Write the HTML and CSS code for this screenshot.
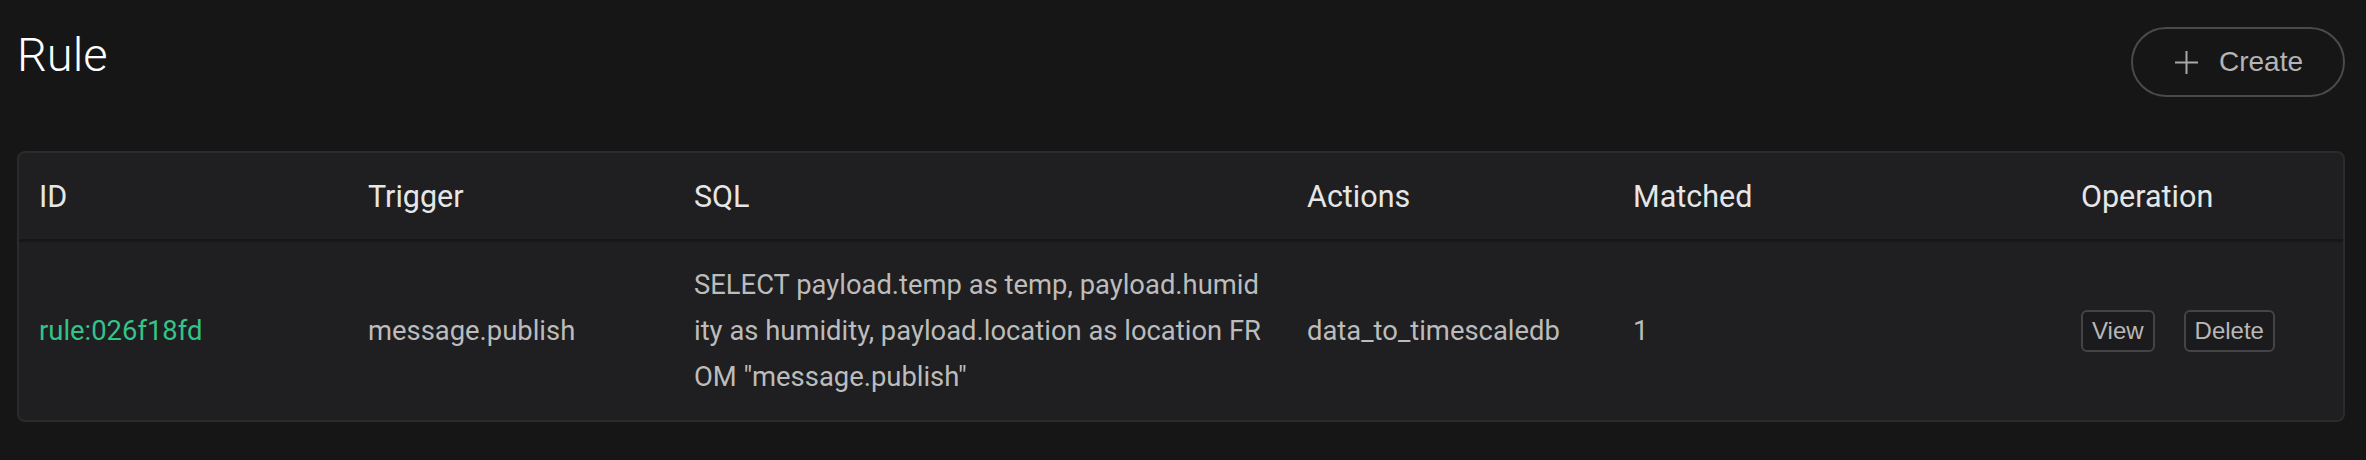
FILE: index.html
```html
<!DOCTYPE html>
<html lang="en">
<head>
<meta charset="utf-8">
<title>Rule</title>
<link rel="stylesheet" href="styles.css">
</head>
<body>
<div class="page">
  <header class="page-header">
    <h1 class="title">Rule</h1>
    <button class="create-btn" type="button">
      <svg class="plus" width="23" height="23" viewBox="0 0 23 23" aria-hidden="true">
        <path d="M11.5 0 V23 M0 11.5 H23" stroke="#a8a8a8" stroke-width="2" fill="none"/>
      </svg>
      <span>Create</span>
    </button>
  </header>
  <div class="card">
    <table class="rules">
      <colgroup>
        <col class="c-id"><col class="c-trigger"><col class="c-sql"><col class="c-actions"><col class="c-matched"><col class="c-op">
      </colgroup>
      <thead>
        <tr>
          <th>ID</th>
          <th>Trigger</th>
          <th>SQL</th>
          <th>Actions</th>
          <th>Matched</th>
          <th>Operation</th>
        </tr>
      </thead>
      <tbody>
        <tr>
          <td><a class="rule-id" href="#">rule:026f18fd</a></td>
          <td>message.publish</td>
          <td class="sql"><span class="sql-line">SELECT payload.temp as temp, payload.humid</span><span class="sql-line">ity as humidity, payload.location as location FR</span><span class="sql-line">OM "message.publish"</span></td>
          <td>data_to_timescaledb</td>
          <td>1</td>
          <td>
            <div class="ops">
              <button class="op-btn" type="button">View</button>
              <button class="op-btn" type="button">Delete</button>
            </div>
          </td>
        </tr>
      </tbody>
    </table>
  </div>
</div>
</body>
</html>
```
FILE: styles.css
```css
html, body {
  margin: 0;
  padding: 0;
  background: #161616;
}
body {
  font-family: Roboto, "Liberation Sans", sans-serif;
  color: #bdbdbd;
}
.page {
  padding: 27px 21px 0 17px;
}
.page-header {
  display: flex;
  justify-content: space-between;
  align-items: flex-start;
}
.title {
  margin: 4px 0 0 0;
  font-size: 47px;
  line-height: 47px;
  font-weight: 300;
  color: #ffffff;
}
.create-btn {
  display: flex;
  align-items: center;
  gap: 21px;
  height: 70px;
  box-sizing: border-box;
  padding: 0 40px 0 42px;
  border: 2px solid #4a4a4d;
  border-radius: 35px;
  background: #161616;
  color: #b4b4b4;
  font-family: "Liberation Sans", Arial, sans-serif;
  font-size: 28px;
  cursor: pointer;
}
.plus {
  display: block;
}
.card {
  margin-top: 54px;
  border: 2px solid #2b2a2d;
  border-radius: 8px;
  background: #1f1e20;
  overflow: hidden;
}
.rules {
  width: 100%;
  table-layout: fixed;
  border-collapse: collapse;
}
.c-id { width: 329px; }
.c-trigger { width: 326px; }
.c-sql { width: 613px; }
.c-actions { width: 326px; }
.c-matched { width: 448px; }
.c-op { width: auto; }
.rules th {
  height: 86px;
  padding: 0 20px;
  text-align: left;
  font-size: 30.5px;
  font-weight: 400;
  color: #e6e6e6;
  border-bottom: 3px solid #171717;
  vertical-align: middle;
}
.rules td {
  padding: 20px 20px;
  font-size: 27.4px;
  line-height: 46px;
  color: #bcbcbc;
  vertical-align: middle;
}
.sql-line {
  display: block;
  white-space: nowrap;
}
.rule-id {
  color: #34c388;
  text-decoration: none;
}
.ops {
  display: flex;
  gap: 29px;
  align-items: center;
}
.op-btn {
  box-sizing: border-box;
  height: 42px;
  padding: 0 9px;
  border: 2px solid #444447;
  border-radius: 6px;
  background: #1b1a1c;
  color: #b8b8b8;
  font-family: "Liberation Sans", Arial, sans-serif;
  font-size: 24px;
  line-height: 38px;
  cursor: pointer;
}
```
